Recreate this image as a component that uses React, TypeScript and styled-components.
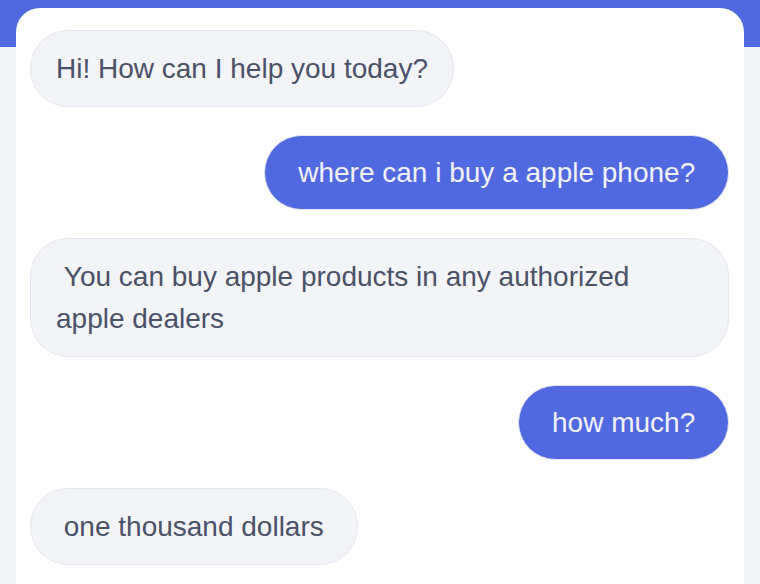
import React from "react";
import styled, { createGlobalStyle } from "styled-components";

const GlobalStyle = createGlobalStyle`
  html, body {
    margin: 0;
    padding: 0;
    background: #f3f4f8;
  }
  body {
    font-family: "Liberation Sans", Arial, Helvetica, sans-serif;
  }
`;

const Page = styled.div`
  min-height: 584px;
  box-sizing: border-box;
  padding: 8px 16px 0 16px;
  background: linear-gradient(to bottom, #5169e0 0, #5169e0 47px, #f3f4f8 47px);
  display: flex;
  flex-direction: column;
`;

const Card = styled.div`
  flex: 1;
  background: #ffffff;
  border-radius: 24px 24px 0 0;
  padding: 22px 15px 24px 14px;
  display: flex;
  flex-direction: column;
  gap: 28px;
`;

const Bubble = styled.div<{ $mine?: boolean }>`
  align-self: ${(p) => (p.$mine ? "flex-end" : "flex-start")};
  max-width: 100%;
  box-sizing: border-box;
  border: 1px solid ${(p) => (p.$mine ? "#e3e6f5" : "#e5e7f0")};
  background: ${(p) => (p.$mine ? "#5169e0" : "#f3f4f8")};
  color: ${(p) => (p.$mine ? "#f1f2fd" : "#4a5168")};
  border-radius: 38px;
  padding: ${(p) => (p.$mine ? "16px 25px 15px" : "17px 25px 16px")};
  font-size: 28px;
  line-height: 42px;
  white-space: pre-wrap;
`;

const messages: { mine: boolean; text: string }[] = [
  { mine: false, text: "Hi! How can I help you today?" },
  { mine: true, text: "\u00a0where can i buy a apple phone?\u00a0" },
  { mine: false, text: "\u00a0You can buy apple products in any authorized apple dealers" },
  { mine: true, text: "\u00a0how much?\u00a0" },
  { mine: false, text: "\u00a0one thousand dollars\u00a0" },
];

export default function App() {
  return (
    <>
      <GlobalStyle />
      <Page>
        <Card>
          {messages.map((m, i) => (
            <Bubble key={i} $mine={m.mine}>
              {m.text}
            </Bubble>
          ))}
        </Card>
      </Page>
    </>
  );
}
